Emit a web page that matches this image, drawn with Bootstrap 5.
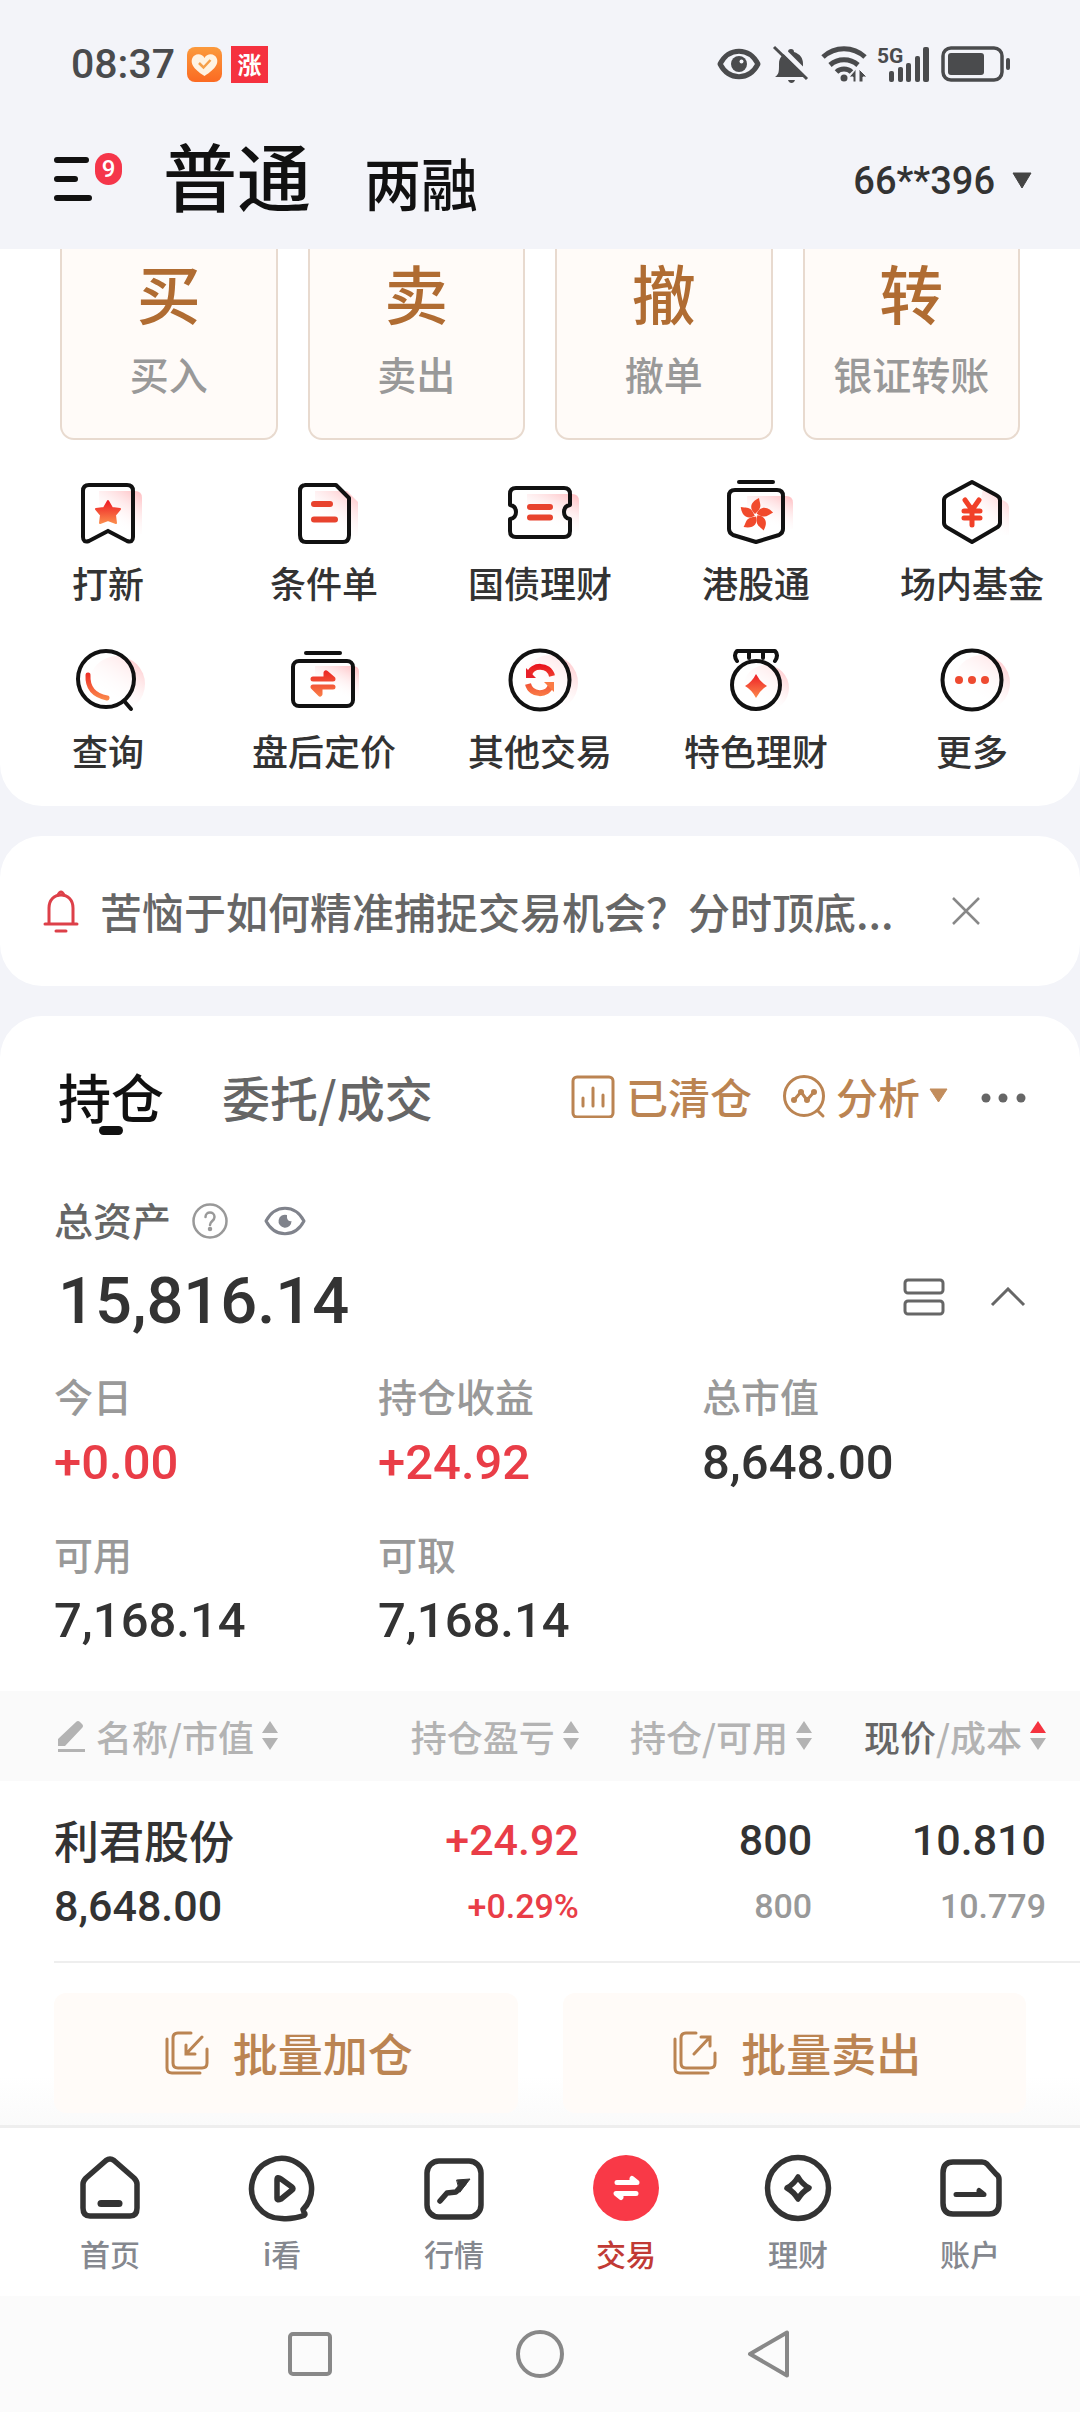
<!DOCTYPE html>
<html lang="zh-CN">
<head>
<meta charset="utf-8">
<meta name="viewport" content="width=device-width, initial-scale=1">
<title>交易</title>
<link href="https://cdn.jsdelivr.net/npm/bootstrap@5.3.0/dist/css/bootstrap.min.css" rel="stylesheet">
<style>
  :root { --ink:#333; --soft:#666; --mute:#999; --red:#e93d47; --gold:#bb8452; --cream:#fffbf8; }
  body { background:#f3f4f9; color:var(--ink); font-family:"Noto Sans CJK SC",sans-serif; font-size:36px; font-weight:500; line-height:48px; }
  svg { display:block; flex:none; }
  button { color:inherit; font:inherit; background:none; border:0; padding:0; }
  a { color:inherit; text-decoration:none; }
  h1, h2, p, dl, dd, dt { margin:0; font-weight:inherit; }
  .num { font-family:Roboto,sans-serif; font-weight:500; }

  .status-row { height:128px; padding:0 69px 0 71px; color:#4a4b4d; }
  .status-icons { gap:10px; }
  .clock { font-size:41px; }
  .app-rise { width:37px; height:37px; background:#f5313f; color:#fff; font-size:24px; line-height:36px; font-weight:700; }
  .head-row { height:121px; padding:0 47px 16px 53px; color:#111; }
  .menu-btn { width:72px; height:64px; }
  .menu-badge { top:4px; left:42px; width:27px; height:32px; border-radius:14px; background:#f5364a; color:#fff; font-size:24px; line-height:32px; }
  .modes { margin-left:38px; gap:53px; padding-bottom:6px; }
  .mode-main { font-size:74px; line-height:88px; }
  .mode-alt { font-size:57px; line-height:88px; }
  .account { font-size:38px; color:var(--ink); }

  .panel { background:#fff; border-radius:42px; }
  .panel-cut { border-radius:0 0 42px 42px; }
  .panel-open { border-radius:42px 42px 0 0; }

  .quick { padding:0 60px; gap:30px; }
  .quick a { border:2px solid #e8dacf; border-top:0; border-radius:0 0 14px 14px; background:var(--cream); padding-bottom:37px; text-align:center; }
  .quick b { display:block; font-size:64px; line-height:84px; font-weight:500; color:#b06c32; }
  .quick span { display:block; margin-top:12px; font-size:39px; line-height:56px; color:var(--mute); }
  .tools { padding:34px 0 32px; row-gap:36px; }
  .tools a { width:20%; gap:6px; }

  .notice { height:150px; margin:30px 0; padding:0 100px 0 43px; gap:21px; font-size:42px; color:var(--soft); }
  .tab-row { height:130px; padding:30px 54px 0; }
  .tab-on { font-size:53px; color:#111; }
  .tab-on::after { content:""; position:absolute; left:50%; bottom:-15px; width:24px; height:9px; margin-left:-12px; border-radius:5px; background:#111; }
  .tab-off { font-size:48px; color:var(--soft); margin-left:58px; }
  .gold { color:var(--gold); font-size:42px; gap:30px; }
  .gold a { gap:11px; }

  .assets { padding:45px 54px 38px; }
  .caption { font-size:39px; line-height:56px; color:var(--mute); }
  .total-row { margin-top:12px; }
  .total { font-size:65px; line-height:84px; }
  .stats { row-gap:30px; margin-right:-54px; margin-top:24px; }
  .stats > div { width:324px; }
  .stats dd { margin-top:8px; font-size:49px; line-height:64px; }
  .up { color:var(--red) !important; }

  .holdings { width:100%; table-layout:fixed; }
  .holdings th { height:90px; background:#fafafa; color:#b3b3b3; font-weight:500; }
  .holdings th, .holdings td { padding:0; text-align:right; }
  .holdings th:first-child, .holdings td:first-child { padding-left:54px; text-align:left; }
  .holdings th:last-child, .holdings td:last-child { padding-right:34px; }
  .holdings td { padding-top:26px; padding-bottom:22px; line-height:66px; font-size:43px; }
  .holdings td small { display:block; font-size:34px; color:var(--mute); }
  .holdings td span { display:block; }
  .stock { font-size:45px; }
  .rule { margin-left:54px; height:2px; background:#eee; }
  .batch { padding:30px 54px 12px; gap:45px; background:linear-gradient(#fff 70%,#fafafa); }
  .batch button { height:120px; padding-left:6px; border-radius:12px; background:var(--cream); color:var(--gold); font-size:45px; gap:24px; }

  .tabbar { border-top:3px solid #eee; background:#fff; padding:24px 24px 23px; font-size:30px; line-height:40px; color:#85888f; }
  .tabbar a { gap:9px; }
  .tabbar svg { color:#333; }
  .tabbar .current { color:#c13a35; }
  .sysbar { height:116px; background:#fbfbfb; gap:182px; }
</style>
</head>
<body class="d-flex flex-column min-vh-100">

<svg width="0" height="0" class="position-absolute" aria-hidden="true">
  <defs>
    <linearGradient id="hot" x1="0" y1="0" x2="0" y2="1"><stop offset="0" stop-color="#ee1c25"/><stop offset="1" stop-color="#fb8a4c"/></linearGradient>
    <linearGradient id="hotAbs" gradientUnits="userSpaceOnUse" x1="0" y1="22" x2="0" y2="58"><stop offset="0" stop-color="#e8101c"/><stop offset="1" stop-color="#fb8a4c"/></linearGradient>
    <linearGradient id="ghost" x1="1" y1="0" x2=".45" y2=".85"><stop offset="0" stop-color="#ffb9bd"/><stop offset="1" stop-color="#fff" stop-opacity="0"/></linearGradient>
    <linearGradient id="sun" x1="0" y1="0" x2="0" y2="1"><stop offset="0" stop-color="#fb9a3c"/><stop offset="1" stop-color="#fb6a22"/></linearGradient>
  </defs>
</svg>

<header>
  <div class="status-row d-flex align-items-center">
    <span class="num clock">08:37</span>
    <svg class="ms-2" width="44" height="37" viewBox="0 0 44 37"><rect x="4" y="1" width="35" height="35" rx="8" fill="url(#sun)"/><path d="M21.500 30C9 22 8 17 9 13c2-6 10-6 12.500-1C24 7 32 7 34 13c1 4 0 9-12.500 17z" fill="#fff3e2"/><path d="m16 17 4.500 4.500 7-7.500" fill="none" stroke="#f5a04a" stroke-width="2.500"/></svg>
    <span class="app-rise ms-1 text-center">涨</span>
    <div class="status-icons d-flex align-items-center ms-auto">
      <svg width="44" height="36" viewBox="0 0 44 36"><path d="M3 18C12 1 32 1 41 18 32 35 12 35 3 18z" fill="none" stroke="currentColor" stroke-width="5" stroke-linejoin="round"/><circle cx="22" cy="18" r="8" fill="currentColor"/><circle cx="24.500" cy="15.500" r="2" fill="#f3f4f9"/></svg>
      <svg width="40" height="40" viewBox="0 0 40 40"><path d="M4 33c4-3 4-5 4-13 0-7 4-10 9-12a3 3 0 0 1 6 0c6 2 9 6 9 12 0 8 0 10 4 13z" fill="currentColor"/><path d="M17 36h7c-1 4-6 4-7 0z" fill="currentColor"/><path d="m6 0 32 32" stroke="#f3f4f9" stroke-width="5"/><path d="m3 3 33 32" stroke="currentColor" stroke-width="3"/></svg>
      <svg width="46" height="40" viewBox="0 0 46 40" fill="none" stroke="currentColor" stroke-width="5"><path d="M2 13c12-11 30-11 42 0"/><path d="M9 21c8-7 20-7 28 0"/><path d="M15.500 28c4-4 11-4 15 0"/><circle cx="23" cy="34" r="3.500" fill="currentColor" stroke="none"/><path d="M28 33 35 25V38H32V33zM38 25l8 8h-4v5h-4z" fill="currentColor" stroke="#f3f4f9" stroke-width="1"/></svg>
      <svg width="54" height="40" viewBox="0 0 54 40" fill="currentColor"><text x="0" y="19" font-family="Roboto,sans-serif" font-weight="700" font-size="21">5G</text><rect x="12" y="27" width="5" height="11" rx="2"/><rect x="21" y="23" width="5" height="15" rx="2"/><rect x="29" y="19" width="5" height="19" rx="2"/><rect x="38" y="12" width="5" height="26" rx="2"/><rect x="46" y="3" width="6" height="35" rx="2"/></svg>
      <svg width="70" height="36" viewBox="0 0 70 36"><rect x="2" y="2" width="59" height="32" rx="8" fill="none" stroke="currentColor" stroke-width="3.500"/><rect x="7" y="7" width="36" height="22" rx="3" fill="currentColor"/><rect x="65" y="12" width="4" height="12" rx="2" fill="currentColor"/></svg>
    </div>
  </div>
  <div class="head-row d-flex align-items-center">
    <button class="menu-btn position-relative text-start" type="button" aria-label="菜单">
      <svg width="40" height="64" viewBox="0 0 40 64" stroke="currentColor" stroke-width="6" stroke-linecap="round"><path d="M4 11h29M4 30h18M4 49h32"/></svg>
      <span class="menu-badge num position-absolute text-center">9</span>
    </button>
    <nav class="modes d-flex align-items-baseline">
      <a class="mode-main" href="#">普通</a>
      <a class="mode-alt" href="#">两融</a>
    </nav>
    <button class="account num d-flex align-items-center gap-3 ms-auto" type="button">66**396
      <svg width="22" height="18" viewBox="0 0 22 18"><path d="M2 1h18L11 16z" fill="#444" stroke="#444" stroke-linejoin="round"/></svg>
    </button>
  </div>
</header>

<main>
  <section class="panel panel-cut">
    <div class="quick d-flex">
      <a class="flex-fill w-25" href="#"><b>买</b><span>买入</span></a>
      <a class="flex-fill w-25" href="#"><b>卖</b><span>卖出</span></a>
      <a class="flex-fill w-25" href="#"><b>撤</b><span>撤单</span></a>
      <a class="flex-fill w-25" href="#"><b>转</b><span>银证转账</span></a>
    </div>
    <nav class="tools d-flex flex-wrap">
      <a class="d-flex flex-column align-items-center" href="#">
        <svg width="78" height="78" viewBox="0 0 78 78"><path d="M30 17h36q7 0 7 7v36H30z" fill="url(#ghost)"/><path d="M20 11h38q6 0 6 6v46q0 6-6 4L39 57 20 67q-6 2-6-4V17q0-6 6-6z" fill="none" stroke="#111" stroke-width="4"/><path d="m39 27 4 7 8 1-5 6 1 8-8-3-8 3 1-8-5-6 8-1z" fill="url(#hot)" stroke="url(#hot)" stroke-width="2" stroke-linejoin="round"/></svg>打新</a>
      <a class="d-flex flex-column align-items-center" href="#">
        <svg width="78" height="78" viewBox="0 0 78 78"><path d="M30 17h32l11 11v34H30z" fill="url(#ghost)"/><path d="M20 11h31l13 13v37q0 7-6 7H21q-6 0-6-7V17q0-6 6-6z" fill="none" stroke="#111" stroke-width="4" stroke-linejoin="round"/><path d="M29 30h16M29 45.500h21" stroke="#e8432e" stroke-width="6" stroke-linecap="round"/></svg>条件单</a>
      <a class="d-flex flex-column align-items-center" href="#">
        <svg width="78" height="78" viewBox="0 0 78 78"><path d="M26 20h45q7 0 7 7v30H26z" fill="url(#ghost)"/><path d="M15 14h48q6 0 6 6v11q-6 1-6 7t6 7v12q0 6-6 6H15q-6 0-6-6V45q6-1 6-7t-6-7V20q0-6 6-6z" fill="none" stroke="#111" stroke-width="4" stroke-linejoin="round"/><path d="M29 33h20M29 43.500h20" stroke="#e8432e" stroke-width="6" stroke-linecap="round"/></svg>国债理财</a>
      <a class="d-flex flex-column align-items-center" href="#">
        <svg width="78" height="78" viewBox="0 0 78 78"><path d="M30 22h39q7 0 7 7v26H30z" fill="url(#ghost)"/><path d="M22 8h34" stroke="#111" stroke-width="4" stroke-linecap="round"/><path d="M18 16h42q6 0 6 6v33q0 4-4 6L39 68 16 61q-4-2-4-6V22q0-6 6-6z" fill="none" stroke="#111" stroke-width="4" stroke-linejoin="round"/><g fill="#f14a2c"><path id="petal" d="M38 40c-6-5-5-12 4-16 1 7 4 9-4 16z"/><use href="#petal" transform="rotate(72 39 41)"/><use href="#petal" transform="rotate(144 39 41)"/><use href="#petal" transform="rotate(216 39 41)"/><use href="#petal" transform="rotate(288 39 41)"/></g></svg>港股通</a>
      <a class="d-flex flex-column align-items-center" href="#">
        <svg width="78" height="78" viewBox="0 0 78 78"><path d="m50 15 23 13q3 2 3 5v28H40z" fill="url(#ghost)"/><path d="m39 8 24 13q4 2 4 5v23q0 3-4 5L39 68 15 54q-4-2-4-5V26q0-3 4-5z" fill="none" stroke="#111" stroke-width="4" stroke-linejoin="round"/><path d="m32 26 7 10 7-10M31 37h16M31 44h16M39 36v15" fill="none" stroke="#f14028" stroke-width="5" stroke-linecap="round"/></svg>场内基金</a>
      <a class="d-flex flex-column align-items-center" href="#">
        <svg width="78" height="78" viewBox="0 0 78 78"><circle cx="48" cy="42" r="28" fill="url(#ghost)"/><circle cx="37" cy="37" r="28" fill="#fff" fill-opacity=".5" stroke="#111" stroke-width="4"/><path d="m56 60 6 7" stroke="#111" stroke-width="4" stroke-linecap="round"/><path d="M19 33q-1 19 19 23" fill="none" stroke="url(#hotAbs)" stroke-width="5" stroke-linecap="round"/></svg>查询</a>
      <a class="d-flex flex-column align-items-center" href="#">
        <svg width="78" height="78" viewBox="0 0 78 78"><path d="M30 24h38q6 0 6 6v26H30z" fill="url(#ghost)"/><path d="M21 11h34" stroke="#111" stroke-width="4" stroke-linecap="round"/><rect x="8" y="19" width="60" height="45" rx="6" fill="none" stroke="#111" stroke-width="4"/><path d="M28 37h20l-7-6v6M48 45H28l7 7v-7" fill="none" stroke="url(#hotAbs)" stroke-width="5" stroke-linecap="round" stroke-linejoin="round"/></svg>盘后定价</a>
      <a class="d-flex flex-column align-items-center" href="#">
        <svg width="78" height="78" viewBox="0 0 78 78"><circle cx="49" cy="41" r="28" fill="url(#ghost)"/><circle cx="39" cy="38" r="29.500" fill="#fff" fill-opacity=".5" stroke="#111" stroke-width="4"/><path d="M28 33c3-11 20-11 23 1M50 43c-3 11-20 11-23-1" fill="none" stroke="url(#hotAbs)" stroke-width="6"/><path d="M25 26v10h10z" fill="#e8202a"/><path d="M53 50V40H43z" fill="#fb7a44"/></svg>其他交易</a>
      <a class="d-flex flex-column align-items-center" href="#">
        <svg width="78" height="78" viewBox="0 0 78 78"><circle cx="49" cy="46" r="23" fill="url(#ghost)"/><path d="M20 19q-4-6 0-10h38q4 4 0 10M32 9v7M46 9v7" fill="none" stroke="#111" stroke-width="4" stroke-linecap="round" stroke-linejoin="round"/><circle cx="39" cy="43" r="24" fill="#fff" fill-opacity=".5" stroke="#111" stroke-width="4"/><path d="M39 32q4 8 11 12-7 4-11 12-4-8-11-12 7-4 11-12z" fill="url(#hot)"/></svg>特色理财</a>
      <a class="d-flex flex-column align-items-center" href="#">
        <svg width="78" height="78" viewBox="0 0 78 78"><circle cx="49" cy="41" r="28" fill="url(#ghost)"/><circle cx="39" cy="38" r="29.500" fill="#fff" fill-opacity=".5" stroke="#111" stroke-width="4"/><g fill="#ee4a30"><circle cx="26" cy="38" r="4"/><circle cx="39" cy="38" r="4"/><circle cx="52" cy="38" r="4"/></g></svg>更多</a>
    </nav>
  </section>

  <section class="panel notice d-flex align-items-center">
    <svg width="36" height="44" viewBox="0 0 36 44" fill="none" stroke="#dd4049" stroke-width="3" stroke-linecap="round"><path d="M2 35h32M6 34V19C6 11 11 6 18 6s12 5 12 13v15M13 42h10"/><path d="M15 6q3-6 6 0"/></svg>
    <p>苦恼于如何精准捕捉交易机会？分时顶底...</p>
    <button class="flex-shrink-0 ms-auto" type="button" aria-label="关闭"><svg width="28" height="28" viewBox="0 0 28 28" stroke="#888" stroke-width="2.500"><path d="m1 1 26 26M27 1 1 27"/></svg></button>
  </section>

  <section class="panel panel-open">
    <div class="tab-row d-flex align-items-center">
      <a class="tab-on position-relative ms-1" href="#">持仓</a>
      <a class="tab-off" href="#">委托/成交</a>
      <div class="d-flex align-items-center ms-auto gold">
        <a class="d-flex align-items-center" href="#"><svg width="44" height="44" viewBox="0 0 44 44" fill="none" stroke="currentColor" stroke-width="3" stroke-linecap="round"><rect x="2" y="3" width="40" height="40" rx="4"/><path d="M12 24v8M22 14v18M32 21v11"/></svg>已清仓</a>
        <button class="d-flex align-items-center" type="button"><svg class="me-2" width="46" height="46" viewBox="0 0 46 46" fill="none" stroke="currentColor" stroke-width="3" stroke-linecap="round"><circle cx="22" cy="23" r="19.500"/><path d="m36 38 5 5M12 27l7-8 6 8 7-8"/><g fill="currentColor" stroke="none"><circle cx="12" cy="27" r="3"/><circle cx="19" cy="19" r="3"/><circle cx="25" cy="27" r="3"/><circle cx="32" cy="19" r="3"/></g></svg>分析<svg class="ms-2" width="22" height="18" viewBox="0 0 22 18"><path d="M2 2h17l-8.500 13z" fill="#c28d5d" stroke="#c28d5d" stroke-linejoin="round"/></svg></button>
        <button type="button" aria-label="更多操作"><svg width="46" height="16" viewBox="0 0 46 16" fill="#666"><circle cx="6" cy="10" r="4.500"/><circle cx="23" cy="10" r="4.500"/><circle cx="41" cy="10" r="4.500"/></svg></button>
      </div>
    </div>

    <div class="assets">
      <div class="caption d-flex align-items-center" style="color:#666">总资产
        <svg style="margin-left:20px" width="38" height="42" viewBox="0 0 38 42" fill="none" stroke="#999" stroke-width="2.500" stroke-linecap="round"><circle cx="19" cy="23" r="16.500"/><path d="M14.500 19c0-6 9-6 9 0 0 4-4.500 4-4.500 8"/><circle cx="19" cy="31" r="1" fill="#999"/></svg>
        <svg style="margin-left:35px" width="42" height="36" viewBox="0 0 42 36"><path d="M2 20C11 3 31 3 40 20 31 37 11 37 2 20z" fill="none" stroke="#80838c" stroke-width="3" stroke-linejoin="round"/><path d="M23 14a6.500 6.500 0 1 0 4.500 6q-5 1-4.500-6z" fill="#80838c"/></svg>
      </div>
      <div class="total-row d-flex align-items-center">
        <span class="num total ms-1">15,816.14</span>
        <button class="ms-auto pb-2" type="button" aria-label="视图"><svg width="42" height="38" viewBox="0 0 42 38" fill="none" stroke="#666" stroke-width="3"><rect x="2" y="2" width="38" height="13" rx="3"/><rect x="2" y="23" width="38" height="13" rx="3"/></svg></button>
        <button class="pb-2" style="margin-left:45px" type="button" aria-label="收起"><svg width="36" height="20" viewBox="0 0 36 20"><path d="M2 18 18 2l16 16" fill="none" stroke="#666" stroke-width="3"/></svg></button>
      </div>
      <dl class="stats d-flex flex-wrap">
        <div><dt class="caption">今日</dt><dd class="num up">+0.00</dd></div>
        <div><dt class="caption">持仓收益</dt><dd class="num up">+24.92</dd></div>
        <div><dt class="caption">总市值</dt><dd class="num">8,648.00</dd></div>
        <div><dt class="caption">可用</dt><dd class="num">7,168.14</dd></div>
        <div><dt class="caption">可取</dt><dd class="num">7,168.14</dd></div>
      </dl>
    </div>

    <table class="holdings">
      <colgroup><col style="width:32%"><col style="width:21.600%"><col style="width:21.600%"><col></colgroup>
      <thead>
        <tr>
          <th scope="col"><button class="d-inline-flex align-items-center" type="button"><svg class="me-2" width="34" height="34" viewBox="0 0 34 34" fill="currentColor"><path d="M4 27v-7L22 3q2-2 4 0l2 2q2 2 0 4L11 27zM4 30h27v3H4z"/></svg>名称/市值<svg class="ms-2" width="16" height="30" viewBox="0 0 16 30" fill="currentColor"><path d="m8 0 8 12H0zM0 17h16L8 29z"/></svg></button></th>
          <th scope="col"><button class="d-inline-flex align-items-center" type="button">持仓盈亏<svg class="ms-2" width="16" height="30" viewBox="0 0 16 30" fill="currentColor"><path d="m8 0 8 12H0zM0 17h16L8 29z"/></svg></button></th>
          <th scope="col"><button class="d-inline-flex align-items-center" type="button">持仓/可用<svg class="ms-2" width="16" height="30" viewBox="0 0 16 30" fill="currentColor"><path d="m8 0 8 12H0zM0 17h16L8 29z"/></svg></button></th>
          <th scope="col"><button class="d-inline-flex align-items-center" type="button"><span style="color:#666">现价</span>/成本<svg class="ms-2" width="16" height="30" viewBox="0 0 16 30" fill="currentColor"><path d="m8 0 8 12H0z" fill="#f5333f"/><path d="M0 17h16L8 29z"/></svg></button></th>
        </tr>
      </thead>
      <tbody>
        <tr>
          <td><span class="stock">利君股份</span><span class="num">8,648.00</span></td>
          <td class="num up">+24.92<small class="up">+0.29%</small></td>
          <td class="num">800<small>800</small></td>
          <td class="num">10.810<small>10.779</small></td>
        </tr>
      </tbody>
    </table>
    <div class="rule"></div>
    <div class="batch d-flex">
      <button class="flex-fill w-50 d-flex align-items-center justify-content-center" type="button"><svg width="44" height="44" viewBox="0 0 44 44" fill="none" stroke="currentColor" stroke-width="3" stroke-linecap="round"><path d="M26 2H13q-5 0-5 5v25q0 5 5 5h24q5 0 5-5V18M2 8v29q0 5 5 5h28M37 6 21 23M21 14v9h9"/></svg>批量加仓</button>
      <button class="flex-fill w-50 d-flex align-items-center justify-content-center" type="button"><svg width="44" height="44" viewBox="0 0 44 44" fill="none" stroke="currentColor" stroke-width="3" stroke-linecap="round"><path d="M23 2H13q-5 0-5 5v25q0 5 5 5h24q5 0 5-5V22M2 8v29q0 5 5 5h28M21 23 37 6M28 6h9v9"/></svg>批量卖出</button>
    </div>
  </section>
</main>

<footer class="mt-auto">
  <nav class="tabbar d-flex">
    <a class="flex-fill w-25 d-flex flex-column align-items-center" href="#"><svg width="72" height="72" viewBox="0 0 72 72" fill="none" stroke="currentColor" stroke-width="5.500" stroke-linecap="round" stroke-linejoin="round"><path d="M32 8.500q4-3 8 0L60 26q3 3 3 6v24q0 8-7 8H16q-7 0-7-8V32q0-3 3-6z"/><path d="M27 51.500h18" stroke-width="7"/></svg>首页</a>
    <a class="flex-fill w-25 d-flex flex-column align-items-center" href="#"><svg width="72" height="72" viewBox="0 0 72 72" fill="none" stroke="currentColor" stroke-width="5.500" stroke-linecap="round" stroke-linejoin="round"><path d="M57 57.500A30 30 0 1 0 36 66.500q10 1 22-3 2-1 0-3z"/><path d="M31 28q0-4 4-1l11 8q2 2 0 3l-11 9q-4 2-4-1z"/></svg>i看</a>
    <a class="flex-fill w-25 d-flex flex-column align-items-center" href="#"><svg width="72" height="72" viewBox="0 0 72 72" fill="none" stroke="currentColor" stroke-width="5.500" stroke-linecap="round" stroke-linejoin="round"><rect x="9" y="9" width="54" height="56" rx="12"/><path d="m22 49 7-8 9-1 8-9"/><path d="m39 28 13-1-10 13z" fill="currentColor" stroke-width="1"/></svg>行情</a>
    <a class="current flex-fill w-25 d-flex flex-column align-items-center" href="#"><svg width="72" height="72" viewBox="0 0 72 72"><circle cx="36" cy="36" r="33" fill="#f93947"/><path d="M27 30.500h20l-5-4v4M46 41.500H26l5 4v-4" fill="none" stroke="#fff" stroke-width="5" stroke-linecap="round" stroke-linejoin="round"/></svg>交易</a>
    <a class="flex-fill w-25 d-flex flex-column align-items-center" href="#"><svg width="72" height="72" viewBox="0 0 72 72" fill="none" stroke="currentColor" stroke-width="5.500" stroke-linejoin="round"><circle cx="36" cy="36" r="30.500"/><path d="M36 25q4 7 11 11-7 4-11 11-4-7-11-11 7-4 11-11z"/></svg>理财</a>
    <a class="flex-fill w-25 d-flex flex-column align-items-center" href="#"><svg width="72" height="72" viewBox="0 0 72 72" fill="none" stroke="currentColor" stroke-width="5.500" stroke-linecap="round" stroke-linejoin="round"><path d="M19 10h29q3 0 5 2l9 10q3 2 3 5v24q0 11-10 11H19Q9 62 9 51V21q0-11 10-11z"/><path d="M22 42.500h28l-5-4v4" stroke-width="5"/></svg>账户</a>
  </nav>
  <div class="sysbar d-flex align-items-center justify-content-center">
    <button type="button" aria-label="最近任务"><svg width="48" height="48" viewBox="0 0 48 48"><rect x="4" y="4" width="40" height="40" rx="3" fill="none" stroke="#888" stroke-width="4"/></svg></button>
    <button type="button" aria-label="主屏幕"><svg width="48" height="48" viewBox="0 0 48 48"><circle cx="24" cy="24" r="22" fill="none" stroke="#888" stroke-width="4"/></svg></button>
    <button type="button" aria-label="返回"><svg width="48" height="48" viewBox="0 0 48 48"><path d="M41 2.500v43L4 24z" fill="none" stroke="#888" stroke-width="4" stroke-linejoin="round"/></svg></button>
  </div>
</footer>

<script src="https://cdn.jsdelivr.net/npm/bootstrap@5.3.0/dist/js/bootstrap.bundle.min.js"></script>
</body>
</html>
